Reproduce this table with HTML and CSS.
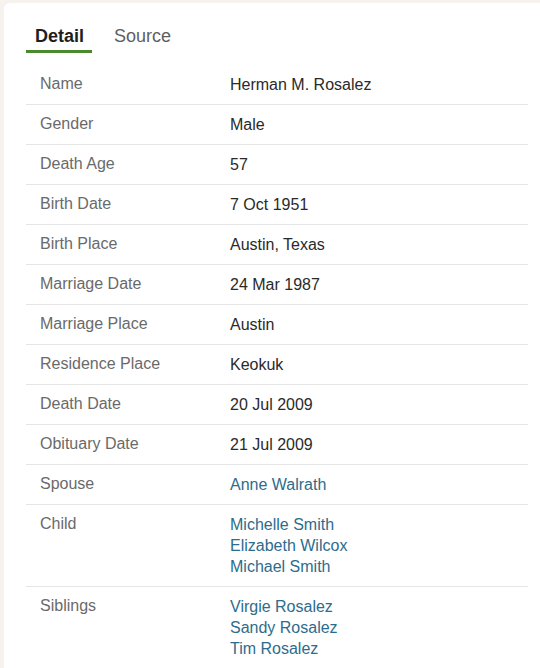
FILE: index.html
```html
<!DOCTYPE html>
<html>
<head>
<meta charset="utf-8">
<link rel="stylesheet" href="styles.css">
</head>
<body>
<div class="card">
  <div class="tabs">
    <div class="tab active">Detail</div>
    <div class="tab">Source</div>
  </div>
  <div class="table">
    <div class="row"><div class="label">Name</div><div class="value">Herman M. Rosalez</div></div>
    <div class="row"><div class="label">Gender</div><div class="value">Male</div></div>
    <div class="row"><div class="label">Death Age</div><div class="value">57</div></div>
    <div class="row"><div class="label">Birth Date</div><div class="value">7 Oct 1951</div></div>
    <div class="row"><div class="label">Birth Place</div><div class="value">Austin, Texas</div></div>
    <div class="row"><div class="label">Marriage Date</div><div class="value">24 Mar 1987</div></div>
    <div class="row"><div class="label">Marriage Place</div><div class="value">Austin</div></div>
    <div class="row"><div class="label">Residence Place</div><div class="value">Keokuk</div></div>
    <div class="row"><div class="label">Death Date</div><div class="value">20 Jul 2009</div></div>
    <div class="row"><div class="label">Obituary Date</div><div class="value">21 Jul 2009</div></div>
    <div class="row"><div class="label">Spouse</div><div class="value"><a class="link">Anne Walrath</a></div></div>
    <div class="row"><div class="label">Child</div><div class="value"><a class="link">Michelle Smith</a><a class="link">Elizabeth Wilcox</a><a class="link">Michael Smith</a></div></div>
    <div class="row"><div class="label">Siblings</div><div class="value"><a class="link">Virgie Rosalez</a><a class="link">Sandy Rosalez</a><a class="link">Tim Rosalez</a></div></div>
  </div>
</div>
</body>
</html>
```
FILE: styles.css
```css
html, body {
  margin: 0;
  padding: 0;
  background: #f6f2ee;
  font-family: "Liberation Sans", Arial, sans-serif;
  font-size: 16px;
}
.card {
  margin: 3px 0 0 4px;
  background: #ffffff;
  border-radius: 6px 0 0 0;
  padding: 23px 12px 0 22px;
  min-height: 700px;
}
.tabs {
  display: flex;
  gap: 13px;
}
.tab {
  padding: 0 8px 4px 9px;
  font-size: 18px;
  line-height: 20px;
  color: #5f5f5f;
  border-bottom: 3px solid transparent;
}
.tab.active {
  color: #1e1e1e;
  font-weight: bold;
  border-bottom-color: #4b8a2c;
}
.table {
  margin-top: 12px;
}
.row {
  display: flex;
  border-bottom: 1px solid #e6e6e6;
  padding: 9px 0 9px 14px;
  line-height: 21px;
}
.label {
  width: 190px;
  flex: none;
  color: #6a6a6a;
  margin-top: -1px;
}
.value {
  color: #2a2a2a;
  display: flex;
  flex-direction: column;
}
.link {
  color: #2d6c8c;
}
```
